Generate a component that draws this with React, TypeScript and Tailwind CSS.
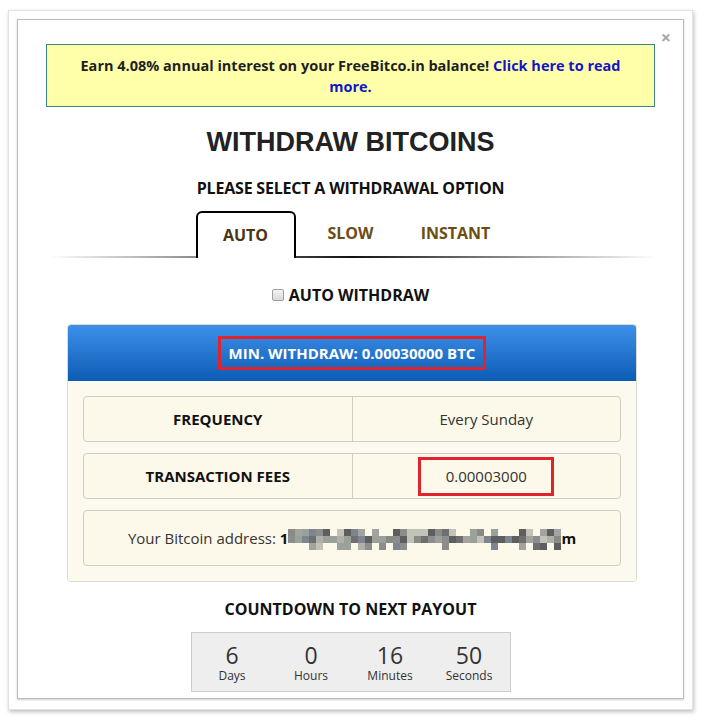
import React from "react";

const font = { fontFamily: "'Open Sans', 'Liberation Sans', sans-serif" };

// pixelated (blurred) bitcoin address
const BlurredAddress = () => {
  const cols = 39;
  const shades = ["#8d8d8d", "#a3a3a0", "#6f6f6f", "#b0b0ab", "#7d8590", "#c2c2b8", "#5e5e5e", "#9aa09a", "#888c84"];
  const cells: { x: number; y: number; c: string }[] = [];
  let seed = 11;
  const rnd = () => {
    seed = (seed * 9301 + 49297) % 233280;
    return seed / 233280;
  };
  for (let i = 0; i < cols; i++) {
    for (let r = 0; r < 3; r++) {
      const p = rnd();
      if (r === 1 || p > (r === 0 ? 0.35 : 0.5)) {
        cells.push({ x: i * 7, y: r * 7, c: shades[Math.floor(rnd() * shades.length)] });
      }
    }
  }
  return (
    <svg width={cols * 7} height={21} className="inline-block align-middle mt-[2px]">
      {cells.map((c, i) => (
        <rect key={i} x={c.x} y={c.y} width={7} height={7} fill={c.c} />
      ))}
    </svg>
  );
};

export default function App() {
  return (
    <div className="w-[703px] h-[719px] bg-white pt-[10px] pl-[8px]" style={font}>
      {/* Outer modal frame */}
      <div className="w-[685px] h-[700px] border border-[#e2e2e2] bg-white shadow-[1px_2px_4px_rgba(0,0,0,0.25)] p-[8px]">
        <div className="relative h-[680px] border border-[#bdbdbd] shadow-[0_1px_2px_rgba(0,0,0,0.2)] overflow-hidden">
          <span className="absolute right-[12px] top-[8px] text-[18px] font-bold text-[#a8a8a8] leading-none">×</span>

          {/* Interest banner */}
          <div className="mx-[28px] mt-[24px] h-[63px] border border-[#3b8585] bg-[#ffffaa] flex items-center justify-center text-center px-6">
            <p className="text-[14.5px] font-bold leading-[21px] text-[#1e1e1e]">
              Earn 4.08% annual interest on your FreeBitco.in balance!{" "}
              <span className="text-[#1313c8]">Click here to read more.</span>
            </p>
          </div>

          <h1
            className="mt-[19px] text-center text-[27px] leading-[32px] font-bold text-[#222]"
            style={{ fontFamily: "'Liberation Sans', Arial, sans-serif" }}
          >
            WITHDRAW BITCOINS
          </h1>

          <h2 className="mt-[20px] text-center text-[16px] leading-[20px] font-bold text-[#111] tracking-[-0.2px]">
            PLEASE SELECT A WITHDRAWAL OPTION
          </h2>

          {/* Tabs */}
          <div className="mt-[13px] relative">
            <div className="flex justify-center relative z-10">
              <div className="w-[100px] h-[47px] border-2 border-b-0 border-black rounded-t-[6px] bg-white flex justify-center pt-[12px]">
                <span className="text-[16px] leading-[20px] font-bold text-[#4b3512]">AUTO</span>
              </div>
              <div className="w-[110px] h-[47px] flex justify-center pt-[12px]">
                <span className="text-[16px] leading-[20px] font-bold text-[#6e4d13]">SLOW</span>
              </div>
              <div className="w-[100px] h-[47px] flex justify-center pt-[12px]">
                <span className="text-[16px] leading-[20px] font-bold text-[#6e4d13]">INSTANT</span>
              </div>
            </div>
            <div className="absolute left-[31px] right-[27px] bottom-0 h-[2px] bg-linear-to-r from-transparent via-[#111] to-transparent" />
          </div>

          {/* Auto withdraw checkbox */}
          <div className="mt-[26px] flex justify-center items-center gap-[5px] h-[22px]">
            <span className="w-[12px] h-[12px] rounded-[2px] border border-[#a0a0a0] bg-linear-to-b from-[#f4f4f4] to-[#d8d8d8]" />
            <span className="text-[16px] font-bold text-[#111] leading-[22px]">AUTO WITHDRAW</span>
          </div>

          {/* Withdraw panel */}
          <div className="mt-[18px] ml-[49px] mr-[46px] rounded-[4px] border border-[#dcdcd0] overflow-hidden">
            <div className="h-[56px] bg-linear-to-b from-[#3c90ea] to-[#0a5cb4] flex items-center justify-center">
              <div className="w-[268px] h-[34px] border-[3px] border-[#e0232c] flex items-center justify-center">
                <span className="text-[15px] font-bold text-white">MIN. WITHDRAW: 0.00030000 BTC</span>
              </div>
            </div>
            <div className="bg-[#fcfaee] p-[15px] flex flex-col gap-[11px]">
              <div className="h-[46px] flex border border-[#cfcdc2] rounded-[4px] bg-[#fcf9ea]">
                <div className="flex-1 flex items-center justify-center border-r border-[#cfcdc2] text-[15px] font-bold text-[#111]">
                  FREQUENCY
                </div>
                <div className="flex-1 flex items-center justify-center text-[15px] text-[#333]">Every Sunday</div>
              </div>
              <div className="h-[46px] flex border border-[#cfcdc2] rounded-[4px] bg-[#fcf9ea]">
                <div className="flex-1 flex items-center justify-center border-r border-[#cfcdc2] text-[15px] font-bold text-[#111]">
                  TRANSACTION FEES
                </div>
                <div className="flex-1 flex items-center justify-center">
                  <div className="w-[136px] h-[39px] border-[3px] border-[#e0232c] flex items-center justify-center text-[15px] text-[#333]">
                    0.00003000
                  </div>
                </div>
              </div>
              <div className="h-[56px] flex items-center justify-center border border-[#cfcdc2] rounded-[4px] bg-[#fcf9ea] text-[15px] text-[#333]">
                <span>Your Bitcoin address:&nbsp;</span>
                <span className="font-bold text-[#111]">1</span>
                <BlurredAddress />
                <span className="font-bold text-[#111]">m</span>
              </div>
            </div>
          </div>

          {/* Countdown */}
          <h3 className="mt-[17px] text-center text-[16px] leading-[20px] font-bold text-[#111]">
            COUNTDOWN TO NEXT PAYOUT
          </h3>
          <div className="mt-[13px] mx-auto w-[320px] h-[60px] bg-[#eeeeee] border border-[#cccccc] grid grid-cols-4 px-[1px] pt-[9px]">
            {[
              ["6", "Days"],
              ["0", "Hours"],
              ["16", "Minutes"],
              ["50", "Seconds"],
            ].map(([n, l]) => (
              <div key={l} className="flex flex-col items-center text-[#333]">
                <span className="text-[23px] leading-[26px]">{n}</span>
                <span className="text-[12px] leading-[15px]">{l}</span>
              </div>
            ))}
          </div>
        </div>
      </div>
    </div>
  );
}
